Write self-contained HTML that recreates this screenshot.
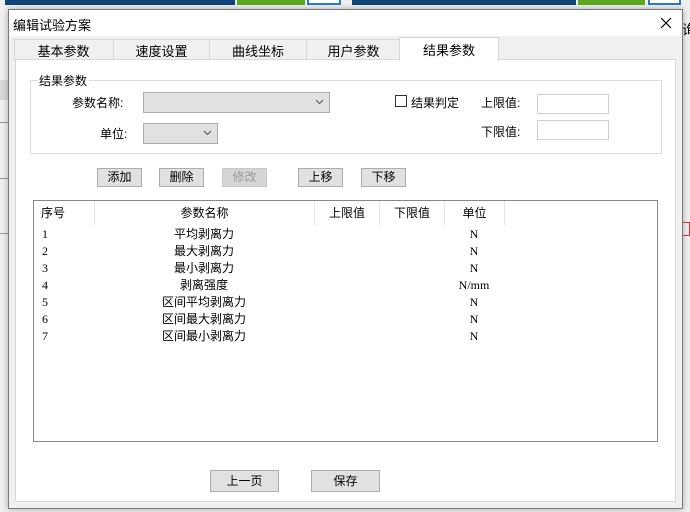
<!DOCTYPE html><html><head><meta charset="utf-8"><style>
*{margin:0;padding:0;box-sizing:border-box}
body{width:690px;height:512px;overflow:hidden;background:#f0f0f0;position:relative;font-family:"Liberation Sans","Noto Sans CJK SC",sans-serif;font-size:12px;color:#000}
.a{position:absolute}
.btn{position:absolute;height:19px;background:#e1e1e1;border:1px solid #adadad;text-align:center;line-height:17px;font-size:12px}
.combo{position:absolute;background:#e1e1e1;border:1px solid #adadad}
.combo svg{position:absolute;right:5px;top:6px}
.inp{position:absolute;background:#fff;border:1px solid #cfcfcf}
.row{position:absolute;left:0;width:624px;height:17px;line-height:17px}
.row span{position:absolute}
.c1{left:8px;font-family:"Liberation Serif",serif}
.c2{left:60px;width:220px;text-align:center}
.c5{left:410px;width:60px;text-align:center;font-family:"Liberation Serif",serif}
.hd{position:absolute;top:0;height:24px;line-height:24px;text-align:center;border-right:1px solid #e5e5e5}
</style></head><body>
<div class="a" style="left:0;top:0;width:690px;height:10px;background:#f0f0f0"></div>
<div class="a" style="left:5px;top:0;width:230px;height:5px;background:#0f4577"></div>
<div class="a" style="left:237px;top:0;width:68px;height:5px;background:#5ba91f"></div>
<div class="a" style="left:307px;top:0;width:34px;height:5px;border:2px solid #2a79c8;border-top:none;background:#fff"></div>
<div class="a" style="left:352px;top:0;width:224px;height:5px;background:#0f4577"></div>
<div class="a" style="left:578px;top:0;width:67px;height:5px;background:#5ba91f"></div>
<div class="a" style="left:648px;top:0;width:33px;height:5px;border:2px solid #2a79c8;border-top:none;background:#fff"></div>
<div class="a" style="left:682px;top:20px;font-size:14px">询</div>
<div class="a" style="left:0;top:80px;width:10px;height:20px;background:#d9d9d9"></div>
<div class="a" style="left:0;top:122px;width:10px;height:1px;background:#999"></div>
<div class="a" style="left:0;top:178px;width:10px;height:1px;background:#999"></div>
<div class="a" style="left:0;top:233px;width:10px;height:1px;background:#999"></div>
<div class="a" style="left:682px;top:222px;width:8px;height:14px;border:1px solid #c33"></div>
<!-- dialog -->
<div class="a" style="left:8px;top:9px;width:675px;height:500px;background:#f0f0f0;border:1px solid #7a7a7a;box-shadow:0 0 6px rgba(0,0,0,.3)">
 <div class="a" style="left:0;top:0;width:673px;height:26px;background:#fff"></div>
 <div class="a" style="left:4px;top:5px;font-size:13px">编辑试验方案</div>
 <svg class="a" style="left:651px;top:7px" width="12" height="12"><path d="M1 1L11 11M11 1L1 11" stroke="#000" stroke-width="1.2"/></svg>
</div>
<!-- tabs -->
<div class="a" style="left:14px;top:39px;width:386px;height:21px;background:#f0f0f0;border:1px solid #d9d9d9;border-bottom:none"></div>
<div class="a" style="left:14px;top:41px;width:99px;text-align:center;font-size:13px">基本参数</div>
<div class="a" style="left:113px;top:39px;width:1px;height:21px;background:#d9d9d9"></div>
<div class="a" style="left:114px;top:41px;width:95px;text-align:center;font-size:13px">速度设置</div>
<div class="a" style="left:209px;top:39px;width:1px;height:21px;background:#d9d9d9"></div>
<div class="a" style="left:210px;top:41px;width:96px;text-align:center;font-size:13px">曲线坐标</div>
<div class="a" style="left:306px;top:39px;width:1px;height:21px;background:#d9d9d9"></div>
<div class="a" style="left:307px;top:41px;width:93px;text-align:center;font-size:13px">用户参数</div>
<div class="a" style="left:15px;top:59px;width:661px;height:443px;background:#fff;border:1px solid #d9d9d9"></div>
<div class="a" style="left:399px;top:37px;width:100px;height:24px;background:#fff;border:1px solid #d9d9d9;border-bottom:none"></div>
<div class="a" style="left:400px;top:40px;width:98px;text-align:center;font-size:13px">结果参数</div>
<!-- group -->
<div class="a" style="left:30px;top:80px;width:632px;height:74px;border:1px solid #dcdcdc"></div>
<div class="a" style="left:37px;top:72px;background:#fff;padding:0 2px">结果参数</div>
<div class="a" style="left:72px;top:94px">参数名称:</div>
<div class="combo" style="left:143px;top:92px;width:187px;height:21px"><svg width="9" height="6"><path d="M1 1L4.5 4.5L8 1" stroke="#555" fill="none"/></svg></div>
<div class="a" style="left:100px;top:125px">单位:</div>
<div class="combo" style="left:143px;top:123px;width:75px;height:21px"><svg width="9" height="6"><path d="M1 1L4.5 4.5L8 1" stroke="#555" fill="none"/></svg></div>
<div class="a" style="left:395px;top:95px;width:12px;height:12px;border:1px solid #333"></div>
<div class="a" style="left:411px;top:94px">结果判定</div>
<div class="a" style="left:481px;top:94px">上限值:</div>
<div class="inp" style="left:537px;top:94px;width:72px;height:20px"></div>
<div class="a" style="left:481px;top:123px">下限值:</div>
<div class="inp" style="left:537px;top:120px;width:72px;height:20px"></div>
<div class="btn" style="left:97px;top:168px;width:45px">添加</div>
<div class="btn" style="left:159px;top:168px;width:45px">删除</div>
<div class="btn" style="left:222px;top:168px;width:45px;color:#9a9a9a;background:#d6d6d6;border-color:#c8c8c8">修改</div>
<div class="btn" style="left:298px;top:168px;width:45px">上移</div>
<div class="btn" style="left:361px;top:168px;width:45px">下移</div>
<!-- list -->
<div class="a" style="left:33px;top:200px;width:625px;height:242px;border:1px solid #828790;background:#fff">
 <div class="hd" style="left:0;width:61px;text-align:left;padding-left:7px">序号</div>
 <div class="hd" style="left:61px;width:220px">参数名称</div>
 <div class="hd" style="left:281px;width:65px">上限值</div>
 <div class="hd" style="left:346px;width:65px">下限值</div>
 <div class="hd" style="left:411px;width:60px">单位</div>
 <div class="row" style="top:25px"><span class="c1">1</span><span class="c2">平均剥离力</span><span class="c5">N</span></div>
 <div class="row" style="top:42px"><span class="c1">2</span><span class="c2">最大剥离力</span><span class="c5">N</span></div>
 <div class="row" style="top:59px"><span class="c1">3</span><span class="c2">最小剥离力</span><span class="c5">N</span></div>
 <div class="row" style="top:76px"><span class="c1">4</span><span class="c2">剥离强度</span><span class="c5">N/mm</span></div>
 <div class="row" style="top:93px"><span class="c1">5</span><span class="c2">区间平均剥离力</span><span class="c5">N</span></div>
 <div class="row" style="top:110px"><span class="c1">6</span><span class="c2">区间最大剥离力</span><span class="c5">N</span></div>
 <div class="row" style="top:127px"><span class="c1">7</span><span class="c2">区间最小剥离力</span><span class="c5">N</span></div>
</div>
<div class="btn" style="left:210px;top:470px;width:69px;height:22px;line-height:20px">上一页</div>
<div class="btn" style="left:311px;top:470px;width:69px;height:22px;line-height:20px">保存</div>
</body></html>
